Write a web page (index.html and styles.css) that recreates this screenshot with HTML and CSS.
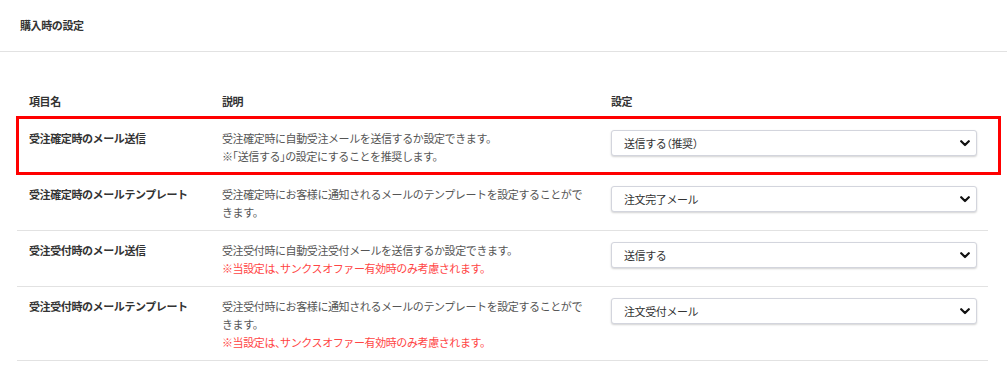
FILE: index.html
```html
<!DOCTYPE html>
<html lang="ja">
<head>
  <meta charset="UTF-8" />
  <meta name="viewport" content="width=device-width, initial-scale=1.0"/>
  <title>購入時の設定</title>
  <link rel="stylesheet" href="styles.css">
</head>
<body>
  <div class="section-title">購入時の設定</div>

  <div class="settings">
    <div class="row head">
      <div class="cell">項目名</div>
      <div class="cell">説明</div>
      <div class="cell">設定</div>
    </div>

    <div class="row marked">
      <div class="cell label">受注確定時のメール送信</div>
      <div class="cell desc">受注確定時に自動受注メールを送信するか設定できます。<br>※「送信する」の設定にすることを推奨します。</div>
      <div class="cell">
        <div class="select-wrap">
          <select><option>送信する（推奨）</option><option>送信しない</option></select>
          <svg class="chevron" width="10" height="7" viewBox="0 0 10 7"><path d="M1.2 1.2 L5 5 L8.8 1.2" fill="none" stroke="#111" stroke-width="2.2" stroke-linecap="round" stroke-linejoin="round"/></svg>
        </div>
      </div>
    </div>

    <div class="row">
      <div class="cell label">受注確定時のメールテンプレート</div>
      <div class="cell desc">受注確定時にお客様に通知されるメールのテンプレートを設定することができます。</div>
      <div class="cell">
        <div class="select-wrap">
          <select><option>注文完了メール</option></select>
          <svg class="chevron" width="10" height="7" viewBox="0 0 10 7"><path d="M1.2 1.2 L5 5 L8.8 1.2" fill="none" stroke="#111" stroke-width="2.2" stroke-linecap="round" stroke-linejoin="round"/></svg>
        </div>
      </div>
    </div>

    <div class="row">
      <div class="cell label">受注受付時のメール送信</div>
      <div class="cell desc">受注受付時に自動受注受付メールを送信するか設定できます。<br><span class="note">※当設定は、サンクスオファー有効時のみ考慮されます。</span></div>
      <div class="cell">
        <div class="select-wrap">
          <select><option>送信する</option><option>送信しない</option></select>
          <svg class="chevron" width="10" height="7" viewBox="0 0 10 7"><path d="M1.2 1.2 L5 5 L8.8 1.2" fill="none" stroke="#111" stroke-width="2.2" stroke-linecap="round" stroke-linejoin="round"/></svg>
        </div>
      </div>
    </div>

    <div class="row">
      <div class="cell label">受注受付時のメールテンプレート</div>
      <div class="cell desc">受注受付時にお客様に通知されるメールのテンプレートを設定することができます。<br><span class="note">※当設定は、サンクスオファー有効時のみ考慮されます。</span></div>
      <div class="cell">
        <div class="select-wrap">
          <select><option>注文受付メール</option></select>
          <svg class="chevron" width="10" height="7" viewBox="0 0 10 7"><path d="M1.2 1.2 L5 5 L8.8 1.2" fill="none" stroke="#111" stroke-width="2.2" stroke-linecap="round" stroke-linejoin="round"/></svg>
        </div>
      </div>
    </div>
  </div>
</body>
</html>
```

FILE: styles.css
```css
body {
  margin: 0;
  background: #fff;
  font-family: "Noto Sans CJK JP", "Noto Sans", sans-serif;
  font-size: 11px;
  letter-spacing: -0.4px;
  font-feature-settings: "halt";
  color: #333;
}

.section-title {
  padding: 16px 20px 17px;
  line-height: 18px;
  font-weight: bold;
  border-bottom: 1px solid #e2e2e2;
}

.settings {
  width: 971px;
  margin: 30px 0 0 17px;
}

.row {
  display: grid;
  grid-template-columns: 193px 388px 1fr;
  border-bottom: 1px solid #e2e2e2;
  position: relative;
}

.row.head {
  font-weight: bold;
}

.row.head .cell {
  padding-bottom: 8px;
}

.cell {
  padding: 10px 12px 9px;
  line-height: 18px;
}

.cell:last-child {
  padding-left: 13px;
  padding-right: 11px;
}

.label {
  font-weight: bold;
  color: #333;
}

.desc {
  color: #555;
}

.note {
  color: #ff4545;
}

/* red highlight frame over the first row */
.row.marked::after {
  content: "";
  position: absolute;
  top: -3px;
  bottom: -1px;
  left: -1px;
  right: -13px;
  border: 3px solid #f00;
  pointer-events: none;
}

.select-wrap {
  position: relative;
  margin-top: 1px;
}

select {
  appearance: none;
  width: 100%;
  height: 26px;
  padding: 0 30px 0 12px;
  font-family: inherit;
  font-size: 11px;
  letter-spacing: -0.4px;
  font-feature-settings: "halt";
  color: #333;
  background: #fff;
  border: 1px solid #d3d5dd;
  border-radius: 3px;
  box-shadow: 0 1px 2px rgba(0, 0, 0, 0.18);
}

.chevron {
  position: absolute;
  right: 7px;
  top: 10px;
  pointer-events: none;
}
```
